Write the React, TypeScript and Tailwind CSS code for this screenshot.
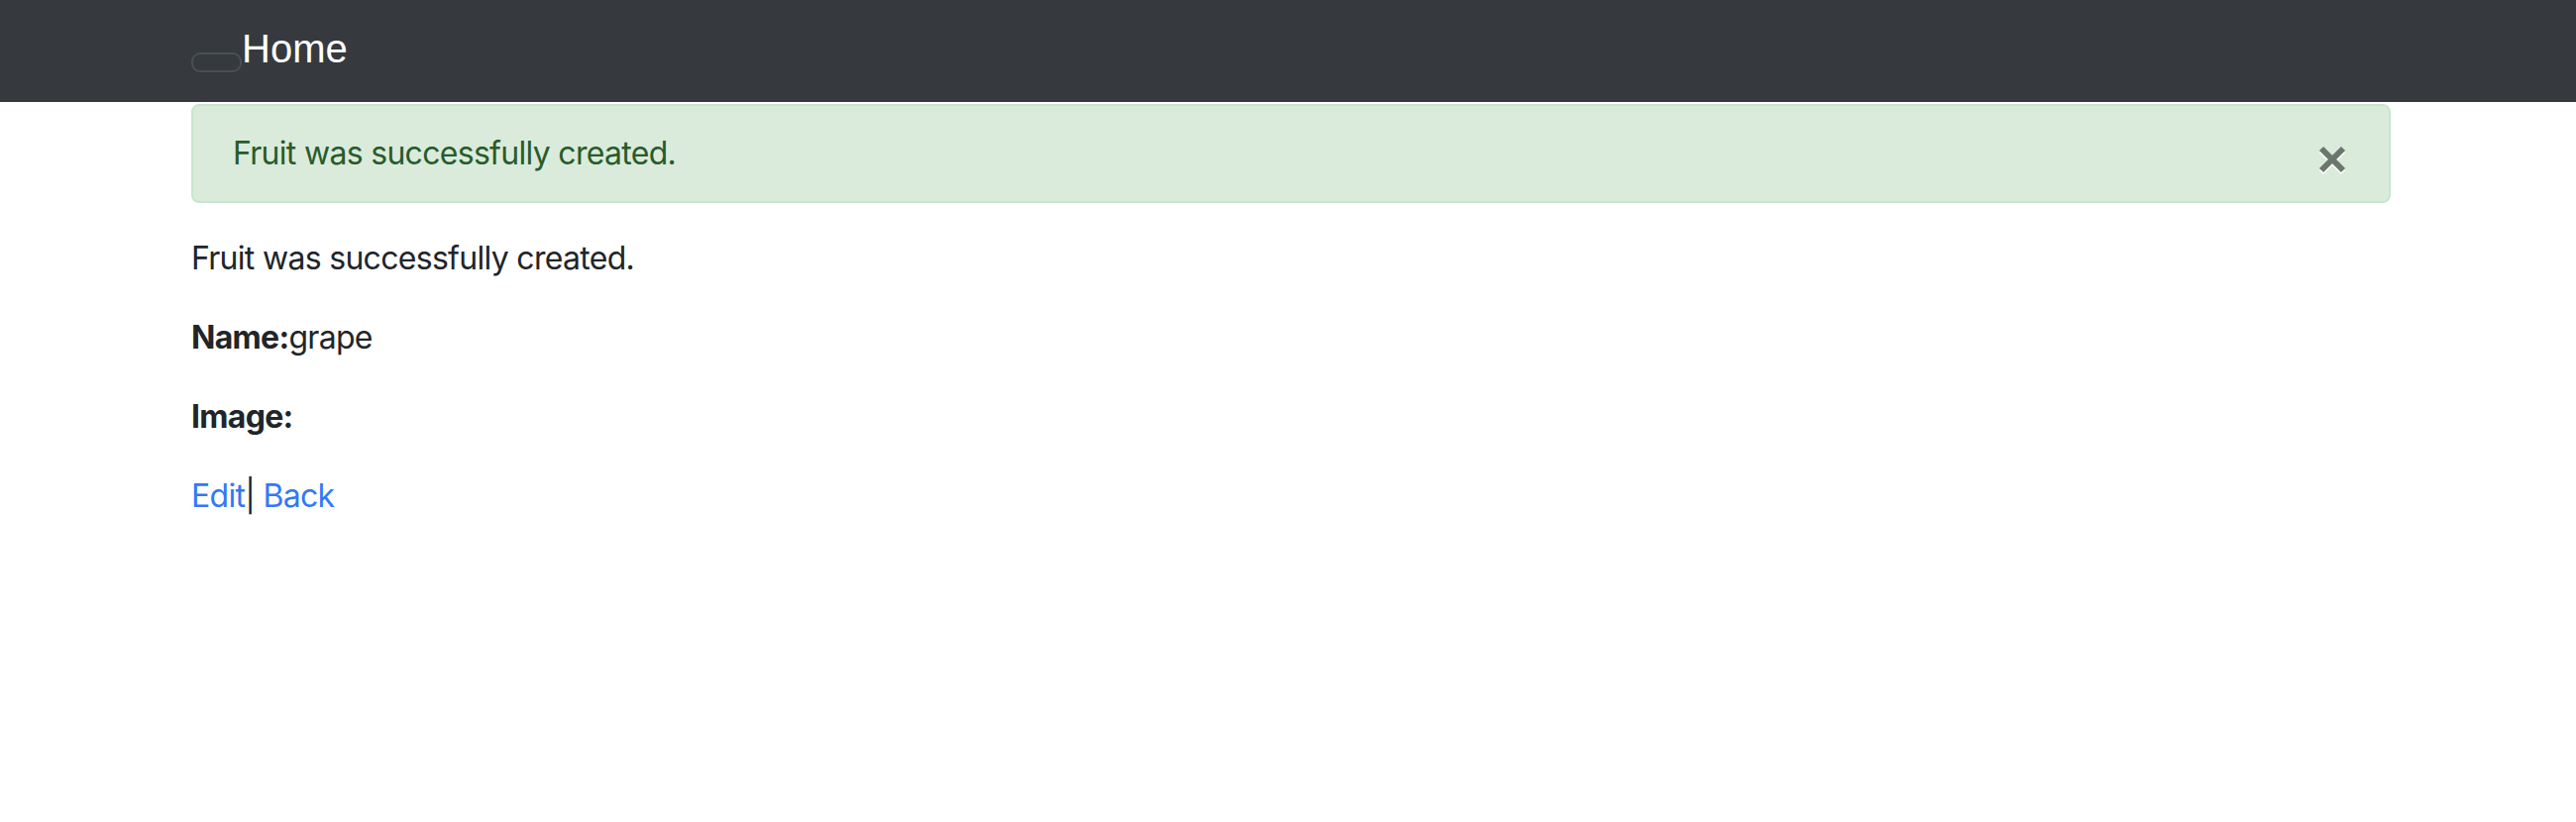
import React from "react";

const Navbar = () => (
  <nav className="h-[103px] bg-[#363a3e]">
    <div className="ml-[193px] w-[2220px] flex items-start pt-[19px]">
      <button className="mt-[34px] w-[51px] h-[20px] rounded-[9px] border-2 border-[#4a4f53]" aria-label="Toggle navigation"></button>
      <a href="#" className="text-[40px] leading-[60px] tracking-normal text-white font-['Liberation_Sans',Arial,sans-serif]">
        Home
      </a>
    </div>
  </nav>
);

const CloseIcon = () => (
  <svg width="28" height="30" viewBox="0 0 28 30" fill="none">
    <g stroke="#ffffff" strokeWidth="6">
      <line x1="3" y1="5" x2="25" y2="27" />
      <line x1="25" y1="5" x2="3" y2="27" />
    </g>
    <g stroke="#6b776d" strokeWidth="6">
      <line x1="3" y1="3" x2="25" y2="25" />
      <line x1="25" y1="3" x2="3" y2="25" />
    </g>
  </svg>
);

export default function App() {
  return (
    <div className="min-h-[830px] bg-white font-['Inter','Noto_Sans',sans-serif] tracking-[-0.7px] text-[#212529]">
      <Navbar />
      <main className="ml-[193px] w-[2220px]">
        <div className="relative mt-[2px] mb-[32px] rounded-[8px] border-2 border-[#c9e6cd] bg-[#daebdc] py-[24px] px-[40px] text-[32px] leading-[48px] text-[#285b2a]">
          Fruit was successfully created.
          <button className="absolute right-[43px] top-[40px]" aria-label="Close">
            <CloseIcon />
          </button>
        </div>
        <p className="mb-[32px] text-[32px] leading-[48px]">Fruit was successfully created.</p>
        <p className="mb-[32px] text-[32px] leading-[48px]">
          <strong className="font-bold">Name:</strong>grape
        </p>
        <p className="mb-[32px] text-[32px] leading-[48px]">
          <strong className="font-bold">Image:</strong>
        </p>
        <div className="text-[32px] leading-[48px]">
          <a href="#" className="text-[#3478f6]">Edit</a>|{" "}
          <a href="#" className="text-[#3478f6]">Back</a>
        </div>
      </main>
    </div>
  );
}
